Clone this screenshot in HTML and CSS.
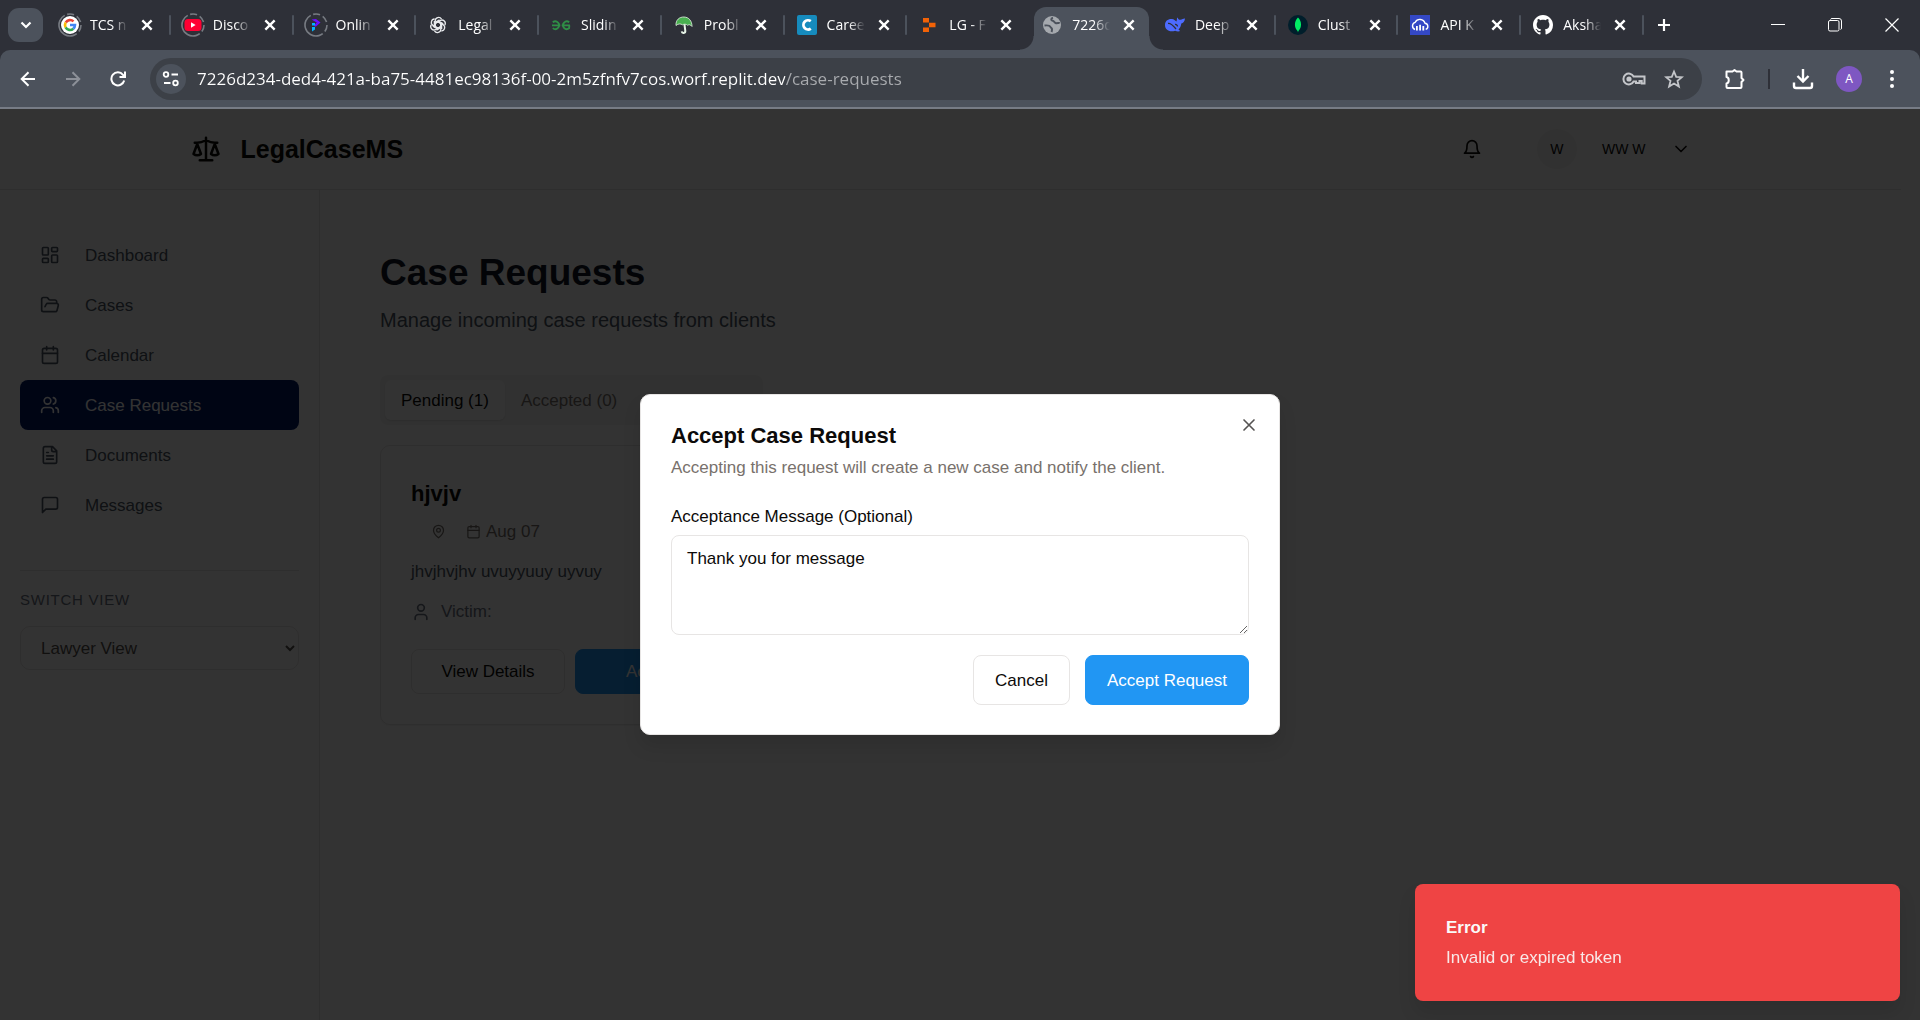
FILE: index.html
```html
<!DOCTYPE html>
<html lang="en">
<head>
<meta charset="utf-8">
<meta name="viewport" content="width=device-width, initial-scale=1">
<title>LegalCaseMS - Case Requests</title>
<link rel="stylesheet" href="styles.css">
</head>
<body>
<svg class="sprite" aria-hidden="true">
  <symbol id="x" viewBox="0 0 12 12"><path d="M2 2l8 8M10 2l-8 8" fill="none" stroke="currentColor" stroke-width="2"/></symbol>
  <symbol id="ring" viewBox="0 0 24 24"><circle cx="12" cy="12" r="11" fill="none" stroke="#777b82" stroke-width="1.6" stroke-dasharray="7 3 7 3 7 3 36 3.1" transform="rotate(-105 12 12)"/></symbol>
  <symbol id="calendar" viewBox="0 0 24 24"><path d="M8 2v4M16 2v4M3 10h18"/><rect width="18" height="18" x="3" y="4" rx="2"/></symbol>
  <symbol id="chevron" viewBox="0 0 24 24"><path d="m6 9 6 6 6-6"/></symbol>
</svg>

<header class="browser">
  <div class="tabstrip">
    <button class="tab-search" aria-label="Search tabs"><svg width="12" height="12" viewBox="0 0 12 12"><path d="M1.500 3.500 6 8l4.500-4.500" fill="none" stroke="#fff" stroke-width="2.200"/></svg></button>
    <div class="tabs">
      <div class="tab"><svg class="favicon" viewBox="0 0 24 24"><use href="#ring"/><circle cx="12" cy="12" r="9" fill="#fff"/><g fill="none" stroke-width="2.600"><path d="M7.800 9.500A5 5 0 0 1 15.500 8.400" stroke="#ea4335"/><path d="M7.600 14.300a5 5 0 0 1 .1-4.800" stroke="#fbbc05"/><path d="M15.300 15.700a5 5 0 0 1-7.700-1.400" stroke="#34a853"/><path d="M12 12h5a5 5 0 0 1-1.700 3.700" stroke="#4285f4"/></g></svg><button class="tab-title">TCS n</button><button class="tab-close" aria-label="Close tab"><svg><use href="#x"/></svg></button></div>
      <div class="tab"><svg class="favicon" viewBox="0 0 24 24"><use href="#ring"/><rect x="3.500" y="6" width="17" height="12" rx="3.500" fill="#ff0033"/><path d="M10 9.300v5.400l4.600-2.700z" fill="#fff"/></svg><button class="tab-title">Disco</button><button class="tab-close" aria-label="Close tab"><svg><use href="#x"/></svg></button></div>
      <div class="tab"><svg class="favicon" viewBox="0 0 24 24"><use href="#ring"/><path d="M7.500 6.500 12 6l4.500 3.500-4.500 4h-1.500l-.3-1.500 2.600-2.500z" fill="#6a11ff"/><path d="M8 10h3v2.500H8zM8 14h3v2.500L8 18.500z" fill="#00b4ff"/></svg><button class="tab-title">Onlin</button><button class="tab-close" aria-label="Close tab"><svg><use href="#x"/></svg></button></div>
      <div class="tab"><svg class="favicon" viewBox="0 0 24 24"><g fill="none" stroke="#e8eaed" stroke-width="1.300" stroke-linejoin="round"><path id="petal" d="M9.200 14V7.800a3.400 3.400 0 0 1 6.300-1.700M9.200 10.400l3.700-2.100 4.300 2.500"/><use href="#petal" transform="rotate(60 12 12)"/><use href="#petal" transform="rotate(120 12 12)"/><use href="#petal" transform="rotate(180 12 12)"/><use href="#petal" transform="rotate(240 12 12)"/><use href="#petal" transform="rotate(300 12 12)"/></g></svg><button class="tab-title">Legal</button><button class="tab-close" aria-label="Close tab"><svg><use href="#x"/></svg></button></div>
      <div class="tab"><svg class="favicon" viewBox="0 0 24 24"><g fill="none" stroke="#2f8d46" stroke-width="1.800"><path d="M3 12.300h8.300M3.800 9.300a3.800 3.800 0 1 1 0 5.800M21 12.300h-8.300M20.200 9.300a3.800 3.800 0 1 0-.1 6l.3-3"/></g></svg><button class="tab-title">Slidin</button><button class="tab-close" aria-label="Close tab"><svg><use href="#x"/></svg></button></div>
      <div class="tab"><svg class="favicon" viewBox="0 0 24 24"><path d="M11.500 9l3 8.500a1.800 1.800 0 0 1-3.400 1.200" fill="none" stroke="#e6f3e6" stroke-width="2" transform="rotate(12 12 12)"/><path d="M4 12.500C3.500 7 7.500 3.800 12 4c5 .2 8 4 8 9.500-1.500-2-3-2.200-4.300-1.200C14 10.800 12 11 10.500 11.800 8.500 10.500 6 10.700 4 12.500z" fill="#49b050" stroke="#e6f3e6" stroke-width=".8"/></svg><button class="tab-title">Probl</button><button class="tab-close" aria-label="Close tab"><svg><use href="#x"/></svg></button></div>
      <div class="tab"><svg class="favicon" viewBox="0 0 24 24"><rect x="2" y="2" width="20" height="20" rx="2" fill="#168bbd"/><path d="M15.800 8.200a4.600 4.600 0 1 0 0 7.400" fill="none" stroke="#fff" stroke-width="2.800"/></svg><button class="tab-title">Caree</button><button class="tab-close" aria-label="Close tab"><svg><use href="#x"/></svg></button></div>
      <div class="tab"><svg class="favicon" viewBox="0 0 24 24"><path d="M6 5h6v4.600H6zM12 9.700h6.500v4.600H12zM6 14.400h6V19H6z" fill="#f26207"/></svg><button class="tab-title">LG - F</button><button class="tab-close" aria-label="Close tab"><svg><use href="#x"/></svg></button></div>
      <div class="tab tab-active"><svg class="favicon" viewBox="0 0 24 24"><circle cx="12" cy="12" r="9" fill="#a5a9ae"/><path d="M4.500 12.500c3-.3 5.300 0 5.800 1.300.4 1.200 1.700 1 1.700 2.200s0 2-.5 3M13 4.800c-2.500.7-2 2.700-.3 2.900 1.500.2 1.300 1.800 2.800 2.300s3.500-.3 4.300.2" fill="none" stroke="#4c525c" stroke-width="2"/></svg><button class="tab-title">7226d</button><button class="tab-close" aria-label="Close tab"><svg><use href="#x"/></svg></button></div>
      <div class="tab"><svg class="favicon" viewBox="0 0 24 24"><path d="M2 12c0-4 3-6.300 7-6 2 .2 3 1.500 4.500 2.500.8-2 0-3.500 1-4 .7 1.500 1.500 2.500 3 2.300 1.500-.2 3-1.500 4.500-1.300-.3 3-1.800 4.500-3.700 5-.3 2.500-1.300 4.500-2.800 6l1.700 1.500c-2 .8-3.500.3-5-.3C6.500 19.500 2 17 2 12z" fill="#4d6bfe"/><path d="M5 10.500c3-.5 5.500 2.500 8 5.500M12 11.500c1.500-.3 2.500.8 2.500 2" fill="none" stroke="#2e3038" stroke-width="1.300"/></svg><button class="tab-title">Deep</button><button class="tab-close" aria-label="Close tab"><svg><use href="#x"/></svg></button></div>
      <div class="tab"><svg class="favicon" viewBox="0 0 24 24"><circle cx="12" cy="12" r="10" fill="#001e2b"/><path d="M12 4.500c4 4 4 10 .4 13.500L12 19.500l-.4-1.500C8 14.500 8 8.500 12 4.500z" fill="#00ed64"/></svg><button class="tab-title">Clust</button><button class="tab-close" aria-label="Close tab"><svg><use href="#x"/></svg></button></div>
      <div class="tab"><svg class="favicon" viewBox="0 0 24 24"><path d="M2 2h20v20H2z" fill="#3448c5"/><path d="M7 16.500a3.800 3.800 0 0 1 .2-7.200 5.300 5.300 0 0 1 9.800.9 3.200 3.200 0 0 1 .7 6.200" fill="none" stroke="#fff" stroke-width="1.400"/><path d="M8 13h1.800v4.500H8zM11.200 11.700H13v5.800h-1.800zM14.400 13h1.800v4.500h-1.800z" fill="#fff"/></svg><button class="tab-title">API K</button><button class="tab-close" aria-label="Close tab"><svg><use href="#x"/></svg></button></div>
      <div class="tab"><svg class="favicon" viewBox="0 0 24 24"><g transform="translate(2 2) scale(1.250)"><path fill="#fff" d="M8 0C3.580 0 0 3.580 0 8c0 3.540 2.290 6.530 5.470 7.590.4.070.55-.17.55-.38 0-.19-.01-.82-.01-1.490-2.010.37-2.530-.49-2.690-.94-.09-.23-.48-.94-.82-1.130-.28-.15-.68-.52-.01-.53.63-.01 1.080.58 1.230.82.72 1.210 1.870.87 2.330.66.07-.52.28-.87.51-1.070-1.780-.2-3.640-.89-3.640-3.950 0-.87.31-1.590.82-2.150-.08-.2-.36-1.020.08-2.120 0 0 .67-.21 2.200.82.64-.18 1.320-.27 2-.27s1.360.09 2 .27c1.530-1.040 2.200-.82 2.200-.82.44 1.100.16 1.920.08 2.120.51.56.82 1.270.82 2.150 0 3.070-1.870 3.750-3.650 3.950.29.25.54.73.54 1.480 0 1.070-.01 1.930-.01 2.200 0 .21.15.46.55.38A8.010 8.010 0 0 0 16 8c0-4.420-3.580-8-8-8z"/></g></svg><button class="tab-title">Aksha</button><button class="tab-close" aria-label="Close tab"><svg><use href="#x"/></svg></button></div>
    </div>
    <button class="new-tab" aria-label="New tab"><svg width="14" height="14" viewBox="0 0 14 14"><path d="M7 1v12M1 7h12" stroke="#fff" stroke-width="2.200"/></svg></button>
    <div class="window-controls">
      <button aria-label="Minimize"><svg width="14" height="14" viewBox="0 0 14 14"><path d="M0 6.500h14" stroke="#fff"/></svg></button>
      <button aria-label="Restore"><svg width="14" height="14" viewBox="0 0 14 14" fill="none" stroke="#fff"><path d="M2.500 1.500A1.500 1.500 0 0 1 4 .5h7A2.500 2.500 0 0 1 13.500 3v7a1.500 1.500 0 0 1-1 1.500"/><rect x=".5" y="2.500" width="10.500" height="10.500" rx="1.500"/></svg></button>
      <button aria-label="Close"><svg width="14" height="14" viewBox="0 0 14 14"><path d="M.5.5l13 13M13.500.5l-13 13" stroke="#fff" stroke-width="1.200"/></svg></button>
    </div>
  </div>

  <div class="toolbar">
    <div class="nav-buttons">
      <button aria-label="Back"><svg width="16" height="16" viewBox="0 0 16 16"><path d="M15 8H2M8.500 1.200 1.700 8l6.800 6.800" fill="none" stroke="#fff" stroke-width="2"/></svg></button>
      <button aria-label="Forward" disabled><svg width="16" height="16" viewBox="0 0 16 16"><path d="M1 8h13M7.500 1.200 14.300 8l-6.800 6.800" fill="none" stroke="#8c9098" stroke-width="2"/></svg></button>
      <button aria-label="Reload"><svg width="16" height="16" viewBox="0 0 16 16"><path d="M14.200 9.500A6.500 6.500 0 1 1 13 3.800L14.800 6M15 .5V6H9.500" fill="none" stroke="#fff" stroke-width="2"/></svg></button>
    </div>
    <div class="omnibox">
      <button class="site-info" aria-label="View site information"><svg width="18" height="18" viewBox="0 0 18 18" fill="none" stroke="#fff" stroke-width="1.800"><circle cx="4" cy="4.500" r="2.300"/><path d="M9.500 4.500H16M2 13h6.500"/><circle cx="13.500" cy="13" r="2.300"/></svg></button>
      <input class="url" type="text" aria-label="Address" value="7226d234-ded4-421a-ba75-4481ec98136f-00-2m5zfnfv7cos.worf.replit.dev/case-requests">
      <button aria-label="Passwords"><svg width="24" height="16" viewBox="0 0 24 16" fill="none" stroke="#c4c6ca" stroke-width="2"><path d="M11.600 5.500H22.500v7h-2.800V10h-2.200v2H14v-1.500h-2.400a5.400 5.400 0 1 1 0-5z"/><circle cx="7" cy="8" r="1.600" fill="#c4c6ca"/></svg></button>
      <button aria-label="Bookmark this tab"><svg width="20" height="20" viewBox="0 0 20 20"><path d="M10 2.500l2.200 5.300 5.700.4-4.400 3.700 1.400 5.600-4.900-3-4.900 3 1.400-5.600-4.400-3.700 5.700-.4z" fill="none" stroke="#c4c6ca" stroke-width="1.800"/></svg></button>
    </div>
    <div class="toolbar-actions">
      <button aria-label="Extensions"><svg width="22" height="22" viewBox="0 0 22 22"><path d="M2.500 3.500H8.500L10.500 2l2 1.500h4a1 1 0 0 1 1 1V10l2 2-2 2v5a1 1 0 0 1-1 1h-13a1 1 0 0 1-1-1v-3.500c3-.5 3-6 0-6.500z" fill="none" stroke="#fff" stroke-width="2" stroke-linejoin="round"/></svg></button>
      <span class="toolbar-divider"></span>
      <button aria-label="Downloads"><svg width="22" height="22" viewBox="0 0 22 22"><path d="M11 1v12M5.500 8l5.500 5.500L16.500 8M2 14.500V18a2 2 0 0 0 2 2h14a2 2 0 0 0 2-2v-3.500" fill="none" stroke="#fff" stroke-width="2.400"/></svg></button>
      <button class="profile" aria-label="Profile">A</button>
      <button class="menu" aria-label="Menu"><svg width="6" height="20" viewBox="0 0 6 20" fill="#fff"><circle cx="3" cy="3" r="2"/><circle cx="3" cy="10" r="2"/><circle cx="3" cy="17" r="2"/></svg></button>
    </div>
  </div>
</header>

<div class="viewport">
  <div class="app">
    <header class="app-header">
      <div class="app-header-inner">
        <a class="brand" href="#"><svg class="icon" width="30" height="30" viewBox="0 0 24 24"><path d="m16 16 3-8 3 8c-.87.65-1.920 1-3 1s-2.130-.35-3-1ZM2 16l3-8 3 8c-.87.65-1.920 1-3 1s-2.130-.35-3-1ZM7 21h10M12 3v18M3 7h2c2 0 5-1 7-2 2 1 5 2 7 2h2"/></svg>LegalCaseMS</a>
        <div class="account">
          <button class="bell" aria-label="Notifications"><svg class="icon" width="20" height="20" viewBox="0 0 24 24"><path d="M6 8a6 6 0 0 1 12 0c0 7 3 9 3 9H3s3-2 3-9M10.300 21a1.940 1.940 0 0 0 3.400 0"/></svg></button>
          <button class="user-menu"><span class="avatar">W</span><span>WW W</span><svg class="icon" width="20" height="20"><use href="#chevron"/></svg></button>
        </div>
      </div>
    </header>
    <div class="app-body">
      <aside class="sidebar">
        <nav class="side-nav">
          <a href="#"><svg class="icon" width="20" height="20" viewBox="0 0 24 24"><rect width="7" height="9" x="3" y="3" rx="1"/><rect width="7" height="5" x="14" y="3" rx="1"/><rect width="7" height="9" x="14" y="12" rx="1"/><rect width="7" height="5" x="3" y="16" rx="1"/></svg>Dashboard</a>
          <a href="#"><svg class="icon" width="20" height="20" viewBox="0 0 24 24"><path d="m6 14 1.450-2.900A2 2 0 0 1 9.240 10H20a2 2 0 0 1 1.940 2.500l-1.550 6a2 2 0 0 1-1.940 1.500H4a2 2 0 0 1-2-2V5c0-1.100.9-2 2-2h3.930a2 2 0 0 1 1.660.9l.82 1.200a2 2 0 0 0 1.660.9H18a2 2 0 0 1 2 2v2"/></svg>Cases</a>
          <a href="#"><svg class="icon" width="20" height="20"><use href="#calendar"/></svg>Calendar</a>
          <a href="#" class="current" aria-current="page"><svg class="icon" width="20" height="20" viewBox="0 0 24 24"><path d="M16 21v-2a4 4 0 0 0-4-4H6a4 4 0 0 0-4 4v2"/><circle cx="9" cy="7" r="4"/><path d="M22 21v-2a4 4 0 0 0-3-3.870M16 3.130a4 4 0 0 1 0 7.750"/></svg>Case Requests</a>
          <a href="#"><svg class="icon" width="20" height="20" viewBox="0 0 24 24"><path d="M15 2H6a2 2 0 0 0-2 2v16a2 2 0 0 0 2 2h12a2 2 0 0 0 2-2V7ZM14 2v4a2 2 0 0 0 2 2h4M10 9H8M16 13H8M16 17H8"/></svg>Documents</a>
          <a href="#"><svg class="icon" width="20" height="20" viewBox="0 0 24 24"><path d="M21 15a2 2 0 0 1-2 2H7l-4 4V5a2 2 0 0 1 2-2h14a2 2 0 0 1 2 2z"/></svg>Messages</a>
        </nav>
        <div class="switch-view">
          <label for="view">SWITCH VIEW</label>
          <select id="view"><option>Lawyer View</option><option>Client View</option></select>
        </div>
      </aside>
      <main class="content">
        <h1>Case Requests</h1>
        <p class="subtitle">Manage incoming case requests from clients</p>
        <div class="filter" role="tablist">
          <button role="tab" aria-selected="true" class="selected">Pending (1)</button>
          <button role="tab" aria-selected="false">Accepted (0)</button>
          <button role="tab" aria-selected="false">Rejected (0)</button>
        </div>
        <article class="card">
          <h2>hjvjv</h2>
          <div class="meta">
            <svg class="icon" width="15" height="15" viewBox="0 0 24 24"><path d="M20 10c0 6-8 12-8 12s-8-6-8-12a8 8 0 0 1 16 0Z"/><circle cx="12" cy="10" r="3"/></svg>
            <span class="date"><svg class="icon" width="15" height="15"><use href="#calendar"/></svg>Aug 07</span>
          </div>
          <p class="description">jhvjhvjhv uvuyyuuy uyvuy</p>
          <p class="victim"><svg class="icon" width="20" height="20" viewBox="0 0 24 24"><path d="M19 21v-2a4 4 0 0 0-4-4H9a4 4 0 0 0-4 4v2"/><circle cx="12" cy="7" r="4"/></svg>Victim:</p>
          <div class="card-actions">
            <button class="button">View Details</button>
            <button class="button button-primary">Accept</button>
            <button class="button">Reject</button>
          </div>
        </article>
      </main>
    </div>
  </div>

  <div class="overlay">
    <form class="dialog" role="dialog" aria-labelledby="dialog-title">
      <button type="button" class="dialog-close" aria-label="Close"><svg class="icon" width="20" height="20" viewBox="0 0 24 24"><path d="M18 6 6 18M6 6l12 12"/></svg></button>
      <h2 id="dialog-title">Accept Case Request</h2>
      <p>Accepting this request will create a new case and notify the client.</p>
      <label for="message">Acceptance Message (Optional)</label>
      <textarea id="message">Thank you for message</textarea>
      <div class="dialog-actions">
        <button type="button" class="button">Cancel</button>
        <button type="button" class="button button-primary">Accept Request</button>
      </div>
    </form>
  </div>

  <div class="toast" role="alert">
    <strong>Error</strong>
    <span>Invalid or expired token</span>
  </div>
</div>
</body>
</html>
```
FILE: styles.css
```css
* {
  box-sizing: border-box;
}

html {
  height: 100%;
}

body {
  display: flex;
  flex-direction: column;
  min-height: 100%;
  margin: 0;
  font-family: "Liberation Sans", Arial, sans-serif;
  font-size: 17px;
  line-height: 25px;
  color: #0c0a09;
}

h1,
h2,
p {
  margin: 0;
}

button,
input,
select,
textarea {
  font: inherit;
  color: inherit;
}

button {
  display: flex;
  align-items: center;
  justify-content: center;
  padding: 0;
  border: 0;
  background: none;
}

.sprite {
  position: absolute;
  width: 0;
  height: 0;
}

.icon {
  flex: none;
  fill: none;
  stroke: currentColor;
  stroke-width: 2;
  stroke-linecap: round;
  stroke-linejoin: round;
}

/* Browser frame */

.browser {
  font-family: "Open Sans", "Noto Sans", sans-serif;
  color: #fff;
  background: #2e3038;
}

.tabstrip {
  display: flex;
  align-items: center;
  height: 50px;
  padding-left: 8px;
}

.tab-search {
  flex: none;
  width: 35px;
  height: 34px;
  margin-right: 5px;
  border-radius: 11px;
  background: #4c525c;
}

.tabs {
  display: flex;
  flex: 0 1 1596px;
  align-self: stretch;
  min-width: 0;
}

.tab {
  position: relative;
  display: flex;
  flex: 1;
  align-items: center;
  min-width: 0;
  padding-left: 10px;
}

.tab::after {
  content: "";
  position: absolute;
  right: 0;
  top: 15px;
  width: 2px;
  height: 20px;
  border-radius: 1px;
  background: #4c525c;
}

.tab:has(+ .tab-active)::after {
  display: none;
}

.tab-active {
  z-index: 0;
}

.tab-active::before {
  content: "";
  position: absolute;
  z-index: -1;
  inset: 7px 4px 0;
  border-radius: 12px 12px 0 0;
  background: #4c525c;
}

.tab-active::after {
  z-index: -1;
  top: auto;
  right: -10px;
  bottom: 0;
  left: -10px;
  width: auto;
  height: 14px;
  border-radius: 0;
  background:
    radial-gradient(circle at 0 0, transparent 13px, #4c525c 14px) left / 14px 14px no-repeat,
    radial-gradient(circle at 100% 0, transparent 13px, #4c525c 14px) right / 14px 14px no-repeat;
}

.favicon {
  flex: none;
  width: 24px;
  height: 24px;
}

.tab-title {
  flex: none;
  justify-content: flex-start;
  width: 40px;
  margin-left: 8px;
  font-size: 14px;
  line-height: 24px;
  white-space: nowrap;
  mask-image: linear-gradient(to right, #000 55%, transparent 95%);
}

.tab-close {
  margin-left: 10px;
}

.tab-close svg {
  width: 14px;
  height: 14px;
}

.new-tab {
  width: 28px;
  height: 28px;
  margin-left: 6px;
}

.window-controls {
  display: flex;
  align-self: stretch;
  margin-left: auto;
}

.window-controls button {
  width: 57px;
}

.toolbar {
  display: flex;
  align-items: center;
  height: 59px;
  padding: 0 25px 0 20px;
  border-bottom: 2px solid #777c86;
  border-radius: 10px 10px 0 0;
  background: #4c525c;
}

.nav-buttons {
  display: flex;
  gap: 29px;
  margin-right: 24px;
}

.omnibox {
  display: flex;
  flex: 1;
  align-items: center;
  gap: 18px;
  height: 42px;
  padding: 0 18px 0 6px;
  border-radius: 21px;
  background: #3c4047;
}

.site-info {
  width: 30px;
  height: 30px;
  margin-right: -7px;
  border-radius: 50%;
  background: #4c525c;
}

.url {
  flex: 1;
  min-width: 0;
  padding: 0;
  border: 0;
  outline: 0;
  font-size: 17px;
  background: linear-gradient(to right, #fff 588px, #a9abaf 588px);
  background-clip: text;
  color: transparent;
}

.toolbar-actions {
  display: flex;
  align-items: center;
  gap: 22px;
  margin-left: 22px;
}

.toolbar-divider {
  width: 2px;
  height: 20px;
  background: #2e3038;
}

.profile {
  width: 26px;
  height: 26px;
  border-radius: 50%;
  font-size: 12px;
  background: #7e57c2;
}

.menu {
  margin-left: 5px;
}

/* Page */

.viewport {
  position: relative;
  display: flex;
  flex: 1;
  flex-direction: column;
  background: #fff;
}

.app {
  display: flex;
  flex: 1;
  flex-direction: column;
  padding-right: 19px;
}

.app-header {
  height: 81px;
  border-bottom: 1px solid #e7e5e4;
}

.app-header-inner {
  display: flex;
  align-items: center;
  justify-content: space-between;
  max-width: 1600px;
  height: 80px;
  margin: 0 auto;
  padding: 0 40px;
}

.brand {
  display: flex;
  align-items: center;
  gap: 20px;
  font-size: 25px;
  font-weight: bold;
  color: inherit;
  text-decoration: none;
}

.account {
  display: flex;
  align-items: center;
  gap: 35px;
}

.bell {
  width: 40px;
  height: 40px;
}

.user-menu {
  gap: 25px;
  padding: 0 20px 0 10px;
  font-size: 14px;
}

.avatar {
  width: 40px;
  height: 40px;
  border-radius: 50%;
  line-height: 40px;
  text-align: center;
  background: #f5f5f4;
}

.app-body {
  display: flex;
  flex: 1;
}

.sidebar {
  flex: none;
  width: 320px;
  padding: 40px 20px;
  border-right: 1px solid #e7e5e4;
}

.side-nav a {
  display: flex;
  align-items: center;
  gap: 25px;
  height: 50px;
  padding: 0 20px;
  border-radius: 8px;
  color: #4b5563;
  text-decoration: none;
}

.side-nav .current {
  color: #fff;
  background: #001a66;
}

.switch-view {
  display: flex;
  flex-direction: column;
  gap: 14px;
  margin-top: 40px;
  padding-top: 16px;
  border-top: 1px solid #e7e5e4;
}

.switch-view label {
  font-size: 15px;
  letter-spacing: 0.05em;
  color: #6b7280;
}

.switch-view select {
  height: 44px;
  padding: 0 16px;
  border: 1px solid #e7e5e4;
  border-radius: 10px;
  background: #fff;
  color: #57534e;
}

.content {
  flex: 1;
  padding: 60px;
}

.content h1 {
  font-size: 37px;
  line-height: 45px;
  color: #111827;
}

.subtitle {
  margin-top: 10px;
  font-size: 20px;
  line-height: 30px;
  color: #4b5563;
}

.filter {
  display: flex;
  width: fit-content;
  height: 50px;
  margin-top: 40px;
  padding: 5px;
  border-radius: 8px;
  background: #f5f5f4;
}

.filter button {
  padding: 0 16px;
  border-radius: 6px;
  color: #78716c;
}

.filter .selected {
  color: #0c0a09;
  background: #fff;
  box-shadow: 0 1px 2px #0000001a;
}

.card {
  max-width: 544px;
  margin-top: 20px;
  padding: 30px;
  border: 1px solid #e7e5e4;
  border-radius: 10px;
  box-shadow: 0 1px 2px #0000000d;
}

.card h2,
.dialog h2 {
  font-size: 22px;
  line-height: 30px;
}

.card h2 {
  padding-top: 3px;
}

.meta {
  display: flex;
  align-items: center;
  gap: 20px;
  margin-top: 10px;
  padding-left: 20px;
  color: #78716c;
}

.date {
  display: flex;
  align-items: center;
  gap: 5px;
}

.description {
  margin-top: 15px;
  color: #4b5563;
}

.victim {
  display: flex;
  align-items: center;
  gap: 10px;
  margin-top: 15px;
  color: #6b7280;
}

.card-actions {
  display: flex;
  gap: 10px;
  margin-top: 25px;
}

.card-actions .button {
  flex: 1;
  height: 45px;
}

.button {
  height: 50px;
  padding: 0 21px;
  border: 1px solid #e7e5e4;
  border-radius: 8px;
  background: #fff;
}

.button-primary {
  border-color: #2196f3;
  background: #2196f3;
  color: #fff;
}

/* Modal */

.overlay {
  position: absolute;
  inset: 0;
  display: flex;
  align-items: center;
  justify-content: center;
  background: rgb(0 0 0 / 80%);
}

.dialog {
  position: relative;
  display: flex;
  flex-direction: column;
  width: 640px;
  padding: 28px 30px 29px;
  border: 1px solid #e7e5e4;
  border-radius: 10px;
  background: #fff;
  box-shadow: 0 12px 18px #0000001a;
}

.dialog-close {
  position: absolute;
  top: 20px;
  right: 20px;
  color: #555352;
}

.dialog h2 {
  line-height: 25px;
}

.dialog p {
  margin-top: 7px;
  color: #78716c;
}

.dialog label {
  margin-top: 24px;
}

.dialog textarea {
  height: 100px;
  margin-top: 6px;
  padding: 10px 15px;
  border: 1px solid #e7e5e4;
  border-radius: 8px;
  background: #fff;
  resize: vertical;
}

.dialog-actions {
  display: flex;
  justify-content: flex-end;
  gap: 15px;
  margin-top: 20px;
}

.toast {
  position: absolute;
  right: 20px;
  bottom: 19px;
  display: flex;
  flex-direction: column;
  gap: 5px;
  width: 485px;
  padding: 31px;
  border-radius: 8px;
  background: #ef4444;
  color: #fafaf9;
  box-shadow: 0 12px 18px #0000001a;
}

.toast span {
  opacity: 0.9;
}
```
